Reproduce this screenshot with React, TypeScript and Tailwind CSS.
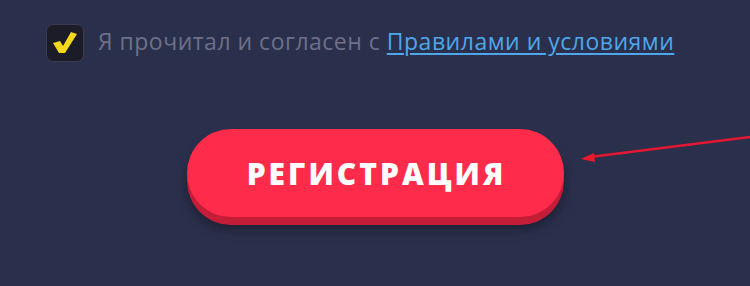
import React from 'react'

export default function App() {
  return (
    <div className="relative w-[750px] h-[286px] overflow-hidden bg-[#2a2f4b] font-['Open_Sans',sans-serif]">
      <div className="flex items-center gap-[14px] pl-[46px] pt-[24px]">
        <div className="w-[38px] h-[38px] rounded-[7px] bg-[#1b1c28] border border-[#3a3d52] flex items-center justify-center">
          <svg width="26" height="24" viewBox="0 0 26 24">
            <polygon points="1,12 8,10 11,15 19,1 25,3 13,22 7,22" fill="#f3d81c" />
          </svg>
        </div>
        <p className="text-[23px] leading-none text-[#6c7088] tracking-[0.5px] pb-[3px]">
          Я прочитал и согласен с{' '}
          <a className="text-[#4fa6ea] underline underline-offset-[3px] decoration-[2px]">Правилами и условиями</a>
        </p>
      </div>

      <div className="flex justify-center pt-[67px]">
        <button className="w-[377px] h-[88px] rounded-full bg-[#ff2b4a] shadow-[0_8px_0_#c41d38,0_12px_12px_rgba(0,0,0,0.35)] flex items-center justify-center">
          <span className="text-white text-[30px] font-extrabold tracking-[3px] pl-[3px] font-['Open_Sans',sans-serif]">РЕГИСТРАЦИЯ</span>
        </button>
      </div>

      <svg className="absolute left-0 top-0" width="750" height="286">
        <line x1="750" y1="137" x2="590" y2="157" stroke="#e3172f" strokeWidth="2.5" />
        <polygon points="581,159 594,153 595,162" fill="#f01a2c" />
      </svg>
    </div>
  )
}
